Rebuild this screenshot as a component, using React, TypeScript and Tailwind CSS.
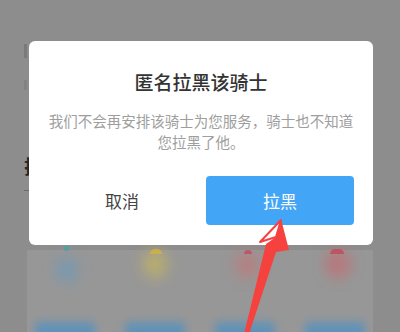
import React from "react";

const blobs = [
  { cls: "left-[56px] top-[258px] w-[22px] h-[24px] bg-[#5a9ac8]" },
  { cls: "left-[143px] top-[250px] w-[24px] h-[28px] bg-[#d9c24a]" },
  { cls: "left-[235px] top-[252px] w-[24px] h-[26px] bg-[#d26a6e]" },
  { cls: "left-[325px] top-[250px] w-[26px] h-[28px] bg-[#d65a62]" },
];

const App = () => {
  return (
    <div
      className="relative w-[400px] h-[332px] overflow-hidden bg-[#8d8d8d]"
      style={{ fontFamily: '"Noto Sans CJK SC", "Noto Sans", sans-serif' }}
    >
      {/* page behind the dim layer */}
      <div className="flex flex-col h-full">
        <div className="flex flex-col pl-[24px] pt-[44px] h-[250px]">
          <div className="w-[3px] h-[14px] bg-[#7a7a7a]" />
          <div className="mt-[22px] w-[3px] h-[10px] bg-[#838383]" />
          <div className="mt-[64px] text-[19px] font-bold leading-[24px] text-[#262626]">拉黑</div>
          <div className="mt-[12px] w-[8px] h-[1px] bg-[#6a6a6a]" />
        </div>
        <div className="flex-1 mx-[27px] bg-[#979797]" />
      </div>

      {/* blurred icons in the lower sheet */}
      {blobs.map((b, i) => (
        <div key={i} className={`absolute rounded-full blur-[7px] opacity-50 ${b.cls}`} />
      ))}
      <div className="absolute left-[64px] top-[246px] w-[5px] h-[5px] rounded-sm bg-[#3fa7a0] opacity-80" />
      <div className="absolute left-[150px] top-[249px] w-[12px] h-[5px] rounded-t-full bg-[#d8b43a] opacity-70" />
      <div className="absolute left-[244px] top-[250px] w-[8px] h-[4px] rounded-t-full bg-[#c2455a] opacity-70" />
      <div className="absolute left-[330px] top-[249px] w-[14px] h-[5px] rounded-t-full bg-[#c94050] opacity-70" />
      <div className="absolute left-0 top-[322px] w-[400px] flex gap-[30px] px-[35px] blur-[4px] opacity-70">
        <div className="w-[62px] h-[20px] rounded bg-[#4a90c4]" />
        <div className="w-[62px] h-[20px] rounded bg-[#4a90c4]" />
        <div className="w-[62px] h-[20px] rounded bg-[#4a90c4]" />
        <div className="w-[62px] h-[20px] rounded bg-[#4a90c4]" />
      </div>

      {/* dialog */}
      <div className="absolute left-[29px] top-[41px] w-[344px] h-[204px] rounded-[6px] bg-white flex flex-col items-center pt-[29px] px-[19px]">
        <div className="text-[19px] leading-[24px] font-medium text-[#333333]">匿名拉黑该骑士</div>
        <div className="mt-[16px] text-[14.5px] leading-[21px] text-[#9e9e9e] text-center whitespace-nowrap">
          我们不会再安排该骑士为您服务，骑士也不知道
          <br />
          您拉黑了他。
        </div>
        <div className="mt-[24px] w-full flex gap-[10px]">
          <button className="flex-1 h-[49px] flex items-center justify-center text-[17px] text-[#444444]">
            取消
          </button>
          <button className="flex-1 h-[49px] rounded-[4px] bg-[#42a5f6] flex items-center justify-center text-[17px] text-white">
            拉黑
          </button>
        </div>
      </div>

      {/* annotation arrow */}
      <svg className="absolute left-0 top-0" width="400" height="332" viewBox="0 0 400 332">
        <polygon points="281,219 289,250 276,252 249,334 244,334 266,244 276,237" fill="#f5423f" />
        <polygon
          points="281,220 260,242 276,237"
          fill="#ffffff"
          stroke="#f5423f"
          strokeWidth="2"
          strokeLinejoin="round"
        />
      </svg>
    </div>
  );
};

export default App;
